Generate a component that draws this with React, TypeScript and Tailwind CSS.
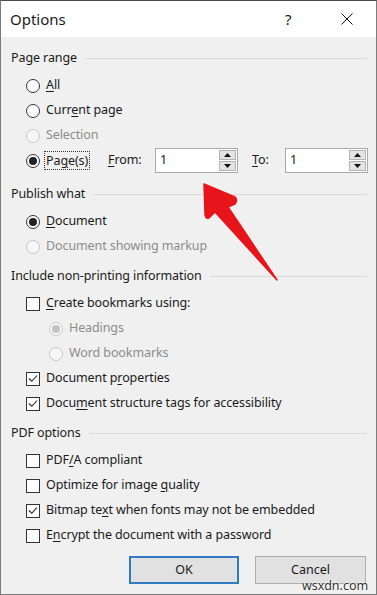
import type { ReactNode } from 'react';

const font = { fontFamily: '"Noto Sans", "Open Sans", sans-serif' };

function Heading({ children, className = '' }: { children: ReactNode; className?: string }) {
  return (
    <div className={`flex items-center h-[20px] pl-[10px] pr-[9px] ${className}`}>
      <span className="text-[12.5px] tracking-[-0.1px] text-[#1a1a1a] whitespace-nowrap">{children}</span>
      <div className="flex-1 h-px bg-[#dadada] ml-[8px]" />
    </div>
  );
}

function Radio({ checked = false, disabled = false }: { checked?: boolean; disabled?: boolean }) {
  return (
    <span
      className={`w-[14px] h-[14px] rounded-full border flex items-center justify-center shrink-0 ${
        disabled ? 'border-[#c8c8c8] bg-[#f7f7f7]' : 'border-[#333333] bg-white'
      }`}
    >
      {checked && (
        <span className={`w-[8px] h-[8px] rounded-full ${disabled ? 'bg-[#c4c4c4]' : 'bg-[#222222]'}`} />
      )}
    </span>
  );
}

function Check({ checked = false }: { checked?: boolean }) {
  return (
    <span className="w-[14px] h-[14px] border border-[#333333] bg-white flex items-center justify-center shrink-0">
      {checked && (
        <svg width="10" height="9" viewBox="0 0 10 9" fill="none">
          <path d="M1 4.5 L3.8 7.3 L9 1.5" stroke="#222" strokeWidth="1.1" />
        </svg>
      )}
    </span>
  );
}

function Row({
  control,
  children,
  disabled = false,
  indent = 25,
}: {
  control: ReactNode;
  children: ReactNode;
  disabled?: boolean;
  indent?: number;
}) {
  return (
    <div
      className={`flex items-center h-[25px] gap-[6px] ${indent === 25 ? 'pl-[25px]' : 'pl-[48px]'} text-[12.5px] tracking-[-0.1px] ${
        disabled ? 'text-[#8c8c8c]' : 'text-[#1a1a1a]'
      }`}
    >
      {control}
      <span className="whitespace-nowrap">{children}</span>
    </div>
  );
}

function Spin() {
  return (
    <div className="w-[83px] h-[25px] border border-[#a9a9a9] bg-white flex items-stretch">
      <span className="flex-1 pl-[4px] text-[12.5px] flex items-center text-[#1a1a1a]">1</span>
      <div className="w-[19px] flex flex-col gap-px p-px">
        <div className="flex-1 bg-[#e3e3e3] border border-[#b3b3b3] flex items-center justify-center">
          <svg width="7" height="4" viewBox="0 0 7 4"><path d="M3.5 0 L7 4 L0 4 Z" fill="#111" /></svg>
        </div>
        <div className="flex-1 bg-[#e3e3e3] border border-[#b3b3b3] flex items-center justify-center">
          <svg width="7" height="4" viewBox="0 0 7 4"><path d="M0 0 L7 0 L3.5 4 Z" fill="#111" /></svg>
        </div>
      </div>
    </div>
  );
}

export default function App() {
  return (
    <div
      className="relative w-[377px] h-[595px] overflow-hidden bg-[#f0f0f0] border border-[#7c7c7c] border-t-[#4a4a4a]"
      style={font}
    >
      {/* Title bar */}
      <div className="h-[36px] bg-white flex items-center pl-[9px] text-[#1a1a1a]">
        <span className="text-[15px] flex-1">Options</span>
        <span className="text-[15px] w-[56px]">?</span>
        <svg width="12" height="12" viewBox="0 0 12 12" className="mr-[23px]">
          <path d="M0.5 0.5 L11.5 11.5 M11.5 0.5 L0.5 11.5" stroke="#111" strokeWidth="1" />
        </svg>
      </div>

      <Heading className="mt-[11px]">Page range</Heading>
      <div className="mt-[5px]">
        <Row control={<Radio />}>
          <u className="underline-offset-2">A</u>ll
        </Row>
        <Row control={<Radio />}>
          Curr<u className="underline-offset-2">e</u>nt page
        </Row>
        <Row control={<Radio disabled />} disabled>
          Selection
        </Row>
        <div className="flex items-center h-[25px] pl-[25px] text-[12.5px] tracking-[-0.1px] text-[#1a1a1a]">
          <div className="w-[82px] flex items-center">
            <Radio checked />
            <span className="ml-[4px] px-[1px] border border-dotted border-[#333] leading-[17px]">
              Pa<u className="underline-offset-2">g</u>e(s)
            </span>
          </div>
          <span className="w-[47px]">
            <u className="underline-offset-2">F</u>rom:
          </span>
          <Spin />
          <span className="ml-[14px] w-[33px]">
            <u className="underline-offset-2">T</u>o:
          </span>
          <Spin />
        </div>
      </div>

      <Heading className="mt-[11px]">Publish what</Heading>
      <div className="mt-[5px]">
        <Row control={<Radio checked />}>
          <u className="underline-offset-2">D</u>ocument
        </Row>
        <Row control={<Radio disabled />} disabled>
          Document showing markup
        </Row>
      </div>

      <Heading className="mt-[7px]">Include non-printing information</Heading>
      <div className="mt-[5px]">
        <Row control={<Check />}>
          <u className="underline-offset-2">C</u>reate bookmarks using:
        </Row>
        <Row control={<Radio checked disabled />} disabled indent={48}>
          Headings
        </Row>
        <Row control={<Radio disabled />} disabled indent={48}>
          Word bookmarks
        </Row>
        <Row control={<Check checked />}>
          Document p<u className="underline-offset-2">r</u>operties
        </Row>
        <Row control={<Check checked />}>
          Docu<u className="underline-offset-2">m</u>ent structure tags for accessibility
        </Row>
      </div>

      <Heading className="mt-[7px]">PDF options</Heading>
      <div className="mt-[5px]">
        <Row control={<Check />}>
          PDF<u className="underline-offset-2">/</u>A compliant
        </Row>
        <Row control={<Check />}>
          Optimize for image <u className="underline-offset-2">q</u>uality
        </Row>
        <Row control={<Check checked />}>
          Bitmap te<u className="underline-offset-2">x</u>t when fonts may not be embedded
        </Row>
        <Row control={<Check />}>
          E<u className="underline-offset-2">n</u>crypt the document with a password
        </Row>
      </div>

      <div className="mt-[8px] flex justify-end gap-[16px] pr-[10px]">
        <button className="w-[110px] h-[28px] bg-[#e1e1e1] border-2 border-[#2f7bbf] text-[12.5px] text-[#1a1a1a]">
          OK
        </button>
        <button className="w-[111px] h-[28px] bg-[#e1e1e1] border border-[#adadad] text-[12.5px] text-[#1a1a1a]">
          Cancel
        </button>
      </div>

      {/* Annotation arrow */}
      <svg className="absolute left-0 top-0 pointer-events-none" width="377" height="595" viewBox="0 0 377 595">
        <path
          d="M203 183 L234 196 Q237 199 234 203 L227 206 L276 279 L214 211 L208 217 Q204 218 204 213 Z"
          fill="#e8141b"
          stroke="#e8141b"
          strokeLinejoin="round"
          strokeWidth="1.5"
        />
      </svg>

      <span
        className="absolute left-[301px] top-[578px] text-[12.5px] leading-[14px] text-[#333]"
        style={{ textShadow: '0 0 2px #fff, 0 0 2px #fff' }}
      >
        wsxdn.com
      </span>
    </div>
  );
}
